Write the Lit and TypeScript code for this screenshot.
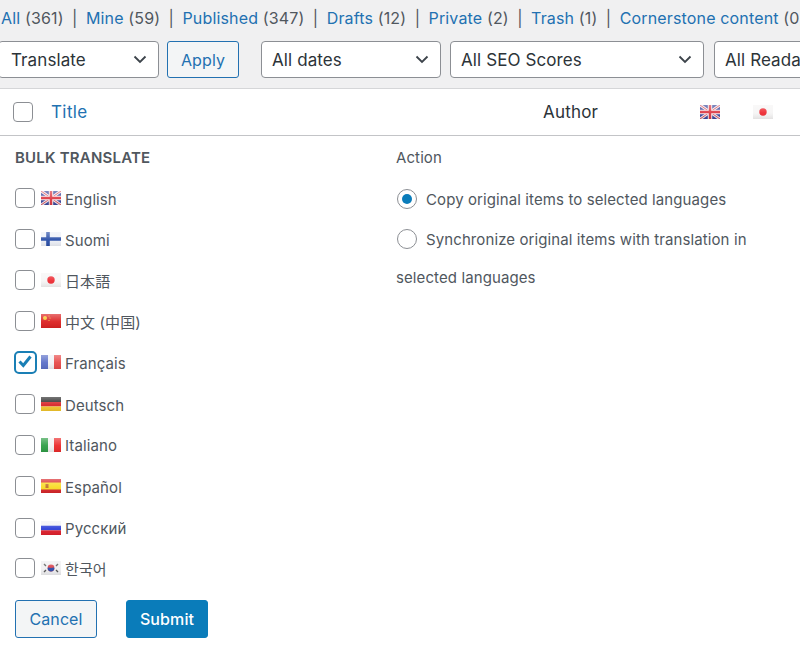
import { LitElement, html, css, svg } from "lit";
import { customElement } from "lit/decorators.js";
import { classMap } from "lit/directives/class-map.js";

const gloss = svg`<defs><linearGradient id="g" x1="0" y1="0" x2="0" y2="1"><stop offset="0" stop-color="#fff" stop-opacity=".35"/><stop offset=".55" stop-color="#fff" stop-opacity=".05"/><stop offset="1" stop-color="#000" stop-opacity=".08"/></linearGradient></defs>`;

const flags: Record<string, unknown> = {
  en: svg`<rect width="20" height="14" fill="#3d4a9e"/><path d="M0 0l20 14M20 0L0 14" stroke="#f3e6ea" stroke-width="3"/><path d="M0 0l20 14M20 0L0 14" stroke="#d8525f" stroke-width="1"/><path d="M10 0v14M0 7h20" stroke="#f5eef0" stroke-width="4.4"/><path d="M10 0v14M0 7h20" stroke="#dd3a44" stroke-width="2.4"/>`,
  fi: svg`<rect width="20" height="14" fill="#eef1f8"/><path d="M7 0v14M0 7h20" stroke="#2a4fa8" stroke-width="3.6"/>`,
  ja: svg`<rect width="20" height="14" fill="#f6f5f5"/><circle cx="10" cy="7" r="3.7" fill="#ee2b33"/>`,
  zh: svg`<rect width="20" height="14" fill="#dc2222"/><circle cx="4" cy="4" r="2" fill="#f7c92f"/><circle cx="8" cy="2" r=".6" fill="#f7c92f"/><circle cx="9" cy="4" r=".6" fill="#f7c92f"/><circle cx="8" cy="6.5" r=".6" fill="#f7c92f"/>`,
  fr: svg`<rect width="7" height="14" fill="#5b6fc8"/><rect x="7" width="6" height="14" fill="#f2f2f6"/><rect x="13" width="7" height="14" fill="#e84a4a"/>`,
  de: svg`<rect width="20" height="5" fill="#2b2b2b"/><rect y="5" width="20" height="4.5" fill="#d8262a"/><rect y="9.5" width="20" height="4.5" fill="#f4c72c"/>`,
  it: svg`<rect width="7" height="14" fill="#2f9e46"/><rect x="7" width="6" height="14" fill="#f3f3f3"/><rect x="13" width="7" height="14" fill="#ec2a2a"/>`,
  es: svg`<rect width="20" height="14" fill="#d8262a"/><rect y="3.5" width="20" height="7" fill="#f9dc28"/><rect x="4.5" y="5" width="3" height="4" fill="#c0702c"/>`,
  ru: svg`<rect width="20" height="4.7" fill="#f2f2f6"/><rect y="4.7" width="20" height="4.6" fill="#2d3fd8"/><rect y="9.3" width="20" height="4.7" fill="#e0202c"/>`,
  ko: svg`<rect width="20" height="14" fill="#efeff1"/><circle cx="10" cy="7" r="3.4" fill="#d83a44"/><path d="M6.6 7a3.4 3.4 0 0 0 6.8 0c-1.2-1-2.2 0-3.4 0s-2.2-1-3.4 0z" fill="#2a4aa8"/><path d="M3 3l2 2M3 11l2-2M17 3l-2 2M17 11l-2-2" stroke="#555" stroke-width="1.4"/>`,
};

const flag = (code: string) => html`<svg class="flag" viewBox="0 0 20 14" aria-hidden="true">${gloss}${flags[code]}<rect width="20" height="14" fill="url(#g)"/></svg>`;

const chevron = html`<svg class="chev" viewBox="0 0 14 9" aria-hidden="true"><path d="M1.5 1.5L7 7l5.5-5.5" fill="none" stroke="#3c434a" stroke-width="1.8"/></svg>`;

const languages = [
  ["en", "English", 0], ["fi", "Suomi", 0], ["ja", "日本語", 0], ["zh", "中文 (中国)", 0], ["fr", "Français", 0],
  ["de", "Deutsch", 1], ["it", "Italiano", 0], ["es", "Español", 0], ["ru", "Русский", 1], ["ko", "한국어", -1],
] as const;

const raisedLabels = ["ja", "zh", "it", "ru", "ko"];

const views: [string, string][] = [
  ["All", "(361)"], ["Mine", "(59)"], ["Published", "(347)"], ["Drafts", "(12)"], ["Private", "(2)"], ["Trash", "(1)"], ["Cornerstone content", "(0)"],
];

@customElement("app-root")
export class AppRoot extends LitElement {
  static styles = css`
    :host { display: block; width: 800px; height: 646px; overflow: hidden; background: #fff;
      font-family: Inter, "Noto Sans CJK KR", "Noto Sans CJK JP", sans-serif; font-size: 15px; letter-spacing: .1px; color: #50575e; }
    .top { background: #f0f0f1; height: 89px; overflow: hidden; box-sizing: border-box; border-bottom: 1px solid #d5d6d8; }
    .views { display: flex; white-space: nowrap; height: 41px; align-items: center; padding: 0 0 5px 1px; box-sizing: border-box; font-size: 16px; letter-spacing: .15px; }
    .views a { color: #2271b1; }
    .views .sep { margin: 0 8.4px; color: #50575e; }
    .filters { display: flex; align-items: flex-start; width: 1000px; margin-left: -2px; }
    .select { height: 37px; box-sizing: border-box; background: #fff; border: 1px solid #8c8f94; border-radius: 4px; white-space: nowrap;
      display: flex; align-items: center; justify-content: space-between; padding: 0 11px 0 12px; color: #2c3338; font-size: 17px; flex: none; }
    .chev { width: 14px; height: 9px; flex: none; }
    .s-tr { width: 161px; margin-right: 8px; }
    .s-da { width: 180px; margin-left: 22px; margin-right: 9px; padding-left: 10px; }
    .s-se { width: 254px; margin-right: 10px; padding-left: 10px; }
    .s-re { width: 250px; padding-left: 10px; }
    .btn { height: 37px; box-sizing: border-box; border-radius: 3px; font-size: 16px; display: flex; align-items: center; justify-content: center; flex: none; }
    .btn.sec { background: #f3f5f6; border: 1px solid #2271b1; color: #2271b1; }
    .btn.pri { background: #0a7cba; border: 1px solid #0a7cba; color: #fff; font-weight: 500; }
    .apply { width: 72px; }
    .head { height: 47px; box-sizing: border-box; border-bottom: 1px solid #c3c4c7; display: flex; align-items: center; font-size: 17px; letter-spacing: .2px; }
    input { appearance: none; -webkit-appearance: none; margin: 0; width: 20px; height: 20px; flex: none; box-sizing: border-box;
      border: 1px solid #8c8f94; background: #fff; border-radius: 4px; }
    .head input { margin-left: 13px; }
    .head .title { color: #2271b1; margin-left: 18px; width: 492px; flex: none; letter-spacing: .4px; }
    .head .author { color: #2c3338; width: 157px; flex: none; }
    .head .flag + .flag { margin-left: 33px; }
    .flag { width: 20px; height: 14px; flex: none; display: block; }
    .body { display: grid; grid-template-columns: 396px 1fr; }
    .left { padding: 14px 0 0 15px; }
    .label { height: 16px; line-height: 16px; }
    .bulk { font-size: 15px; font-weight: 600; letter-spacing: .2px; color: #50575e; }
    .langs { margin-top: 12px; display: flex; flex-direction: column; }
    .lang { display: flex; align-items: center; height: 40px; margin-bottom: 1px; flex: none; }
    .lang .flag { margin: 0 4px 0 6px; }
    .lang span { font-size: 15px; padding-top: 2px; }
    .lang span.raised { padding-top: 0; }
    input.checked { border: 2.5px solid #1a7fb5; width: 23px; height: 23px; margin: 0 -1.5px; border-radius: 5px; display: flex; }
    .tick { position: relative; display: flex; }
    .tick svg { position: absolute; left: 2px; top: 2px; width: 16px; height: 16px; }
    .actions { display: flex; gap: 29px; margin-top: 11px; }
    .actions .btn { width: 82px; height: 38px; }
    .right { padding-top: 14px; }
    .radio { display: flex; align-items: center; gap: 9px; height: 40px; }
    .radios { margin-top: 13px; margin-left: 1px; }
    input[type="radio"] { border-radius: 50%; position: relative; }
    input[type="radio"]:checked::after { content: ""; position: absolute; left: 4px; top: 4px; width: 10px; height: 10px; border-radius: 50%; background: #0a7cba; }
    .cont { height: 38px; line-height: 38px; }
  `;

  render() {
    return html`
      <div class="top">
        <div class="views">
          ${views.map(([n, c], i) => html`${i ? html`<span class="sep">|</span>` : ""}<a>${n}</a>&nbsp;${c}`)}
        </div>
        <div class="filters">
          <div class="select s-tr">Translate ${chevron}</div>
          <div class="btn sec apply">Apply</div>
          <div class="select s-da">All dates ${chevron}</div>
          <div class="select s-se">All SEO Scores ${chevron}</div>
          <div class="select s-re">All Readability Scores ${chevron}</div>
        </div>
      </div>
      <div class="head">
        <input type="checkbox" aria-label="Select all" />
        <span class="title">Title</span>
        <span class="author">Author</span>
        ${flag("en")}${flag("ja")}
      </div>
      <div class="body">
        <div class="left">
          <div class="label bulk">BULK TRANSLATE</div>
          <div class="langs">
            ${languages.map(([code, name, shift]) => html`
              <div class="lang" style="margin-top:${shift}px">
                ${code === "fr"
                  ? html`<div class="tick"><input class="checked" type="checkbox" aria-label=${name} /><svg viewBox="0 0 16 16"><path d="M2.5 8.5l3.8 4L13.5 3.5" fill="none" stroke="#1a7fb5" stroke-width="3"/></svg></div>`
                  : html`<input type="checkbox" aria-label=${name} />`}
                ${flag(code)}<span class=${classMap({ raised: raisedLabels.includes(code) })}>${name}</span>
              </div>`)}
          </div>
          <div class="actions">
            <div class="btn sec">Cancel</div>
            <div class="btn pri">Submit</div>
          </div>
        </div>
        <div class="right">
          <div class="label">Action</div>
          <div class="radios">
            <label class="radio"><input type="radio" name="a" checked />Copy original items to selected languages</label>
            <label class="radio"><input type="radio" name="a" />Synchronize original items with translation in</label>
          </div>
          <div class="cont">selected languages</div>
        </div>
      </div>
    `;
  }
}
